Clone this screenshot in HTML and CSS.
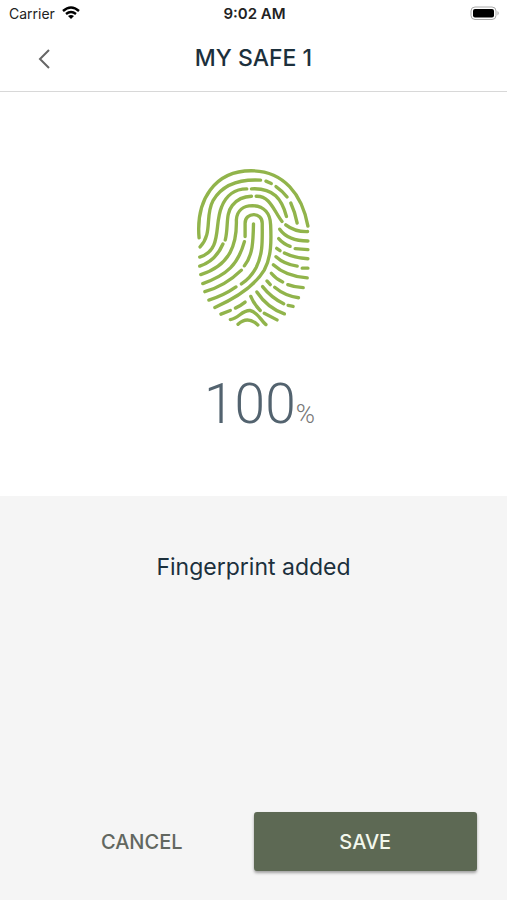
FILE: index.html
```html
<!DOCTYPE html>
<html lang="en">
<head>
    <meta charset="UTF-8">
    <meta name="viewport" content="width=device-width, initial-scale=1.0">
    <title>My Safe 1</title>
    <link rel="stylesheet" href="styles.css">
</head>
<body>
    <div class="screen">
        <div class="status-bar">
            <div class="carrier">
                <span>Carrier</span>
                <svg class="wifi" viewBox="0 0 18 14" aria-hidden="true">
                    <path d="M1 5 Q9 -2 17 5" />
                    <path d="M4 8 Q9 4 14 8" />
                    <path class="dot" d="M6 10 Q9 8 12 10 L9 13 Z" />
                </svg>
            </div>
            <span class="time">9:02 AM</span>
            <svg class="battery" viewBox="0 0 30 15" aria-hidden="true">
                <rect class="battery-case" x="1" y="1" width="25" height="12.5" rx="4" />
                <rect x="3" y="3" width="21" height="8.5" rx="2" />
                <path class="battery-tip" d="M27.5 5 Q30 7.2 27.5 9.5 Z" />
            </svg>
        </div>

        <header class="header">
            <button type="button" class="back" aria-label="Back">
                <svg viewBox="0 0 12 20" aria-hidden="true"><path d="M11 1 L2 10 L11 19" /></svg>
            </button>
            <h1>MY SAFE 1</h1>
        </header>

        <section class="scan">
            <svg class="fingerprint" viewBox="-2 2 387 521" aria-hidden="true">
                <!-- arches -->
                <path d="M28 234 C18 120 75 34 183 34 C280 34 335 105 352 199" />
                <path d="M31 261 C70 218 44 170 70 122 C95 80 140 58 211 62" />
                <path d="M227 65 L243 72 M257 81 Q276 94 290 112 M301 130 Q314 158 320 190" />
                <path d="M30 291 C98 270 72 195 95 142 C108 108 135 88 170 88" />
                <path d="M184 88 C250 84 275 120 288 170" />
                <path d="M30 318 Q77 303 99 252 M106 240 C116 200 106 163 127 137 Q148 111 184 110" />
                <path d="M198 110 C240 108 251 155 275 185" />
                <!-- core -->
                <path d="M33 343 C122 316 141 250 139 180 C141 152 160 138 187 138 C222 139 240 162 241 195 C243 240 244 290 222 330 C196 373 137 413 75 441" />
                <path d="M39 370 C112 344 144 313 163 245" />
                <path d="M165 230 V190 C165 156 216 156 216 190 C216 240 219 280 198 322 Q182 352 154 371" />
                <path d="M190 192 C189 245 188 285 163 317" />
                <!-- lower left -->
                <path d="M45 394 Q106 377 154 330 M57 419 Q99 407 138 380" />
                <path d="M93 461 L121 450 M136 443 Q150 437 165 425" />
                <path d="M121 477 C148 473 154 449 180 450 C202 454 210 478 227 492" />
                <path d="M144 491 Q172 465 203 493" />
                <!-- lower right -->
                <path d="M286 195 Q313 216 351 215 M268 208 C285 232 310 243 352 243" />
                <path d="M265 236 Q279 252 299 259 M314 266 L352 269 M259 265 L269 272" />
                <path d="M282 279 Q312 294 352 296 M257 290 Q281 312 320 318 M335 324 L352 324" />
                <path d="M249 314 Q287 349 350 353 M243 339 Q257 356 277 365 M292 373 Q313 381 338 382" />
                <path d="M230 362 L240 373 M253 381 Q284 407 324 412 M293 435 L308 438" />
                <path d="M217 379 Q243 412 280 430 M200 395 Q232 443 282 460" />
                <path d="M182 408 Q191 431 210 450 M222 458 L260 478" />
            </svg>
            <p class="progress">100<span class="percent">%</span></p>
        </section>

        <main class="result">
            <p class="message">Fingerprint added</p>
            <div class="actions">
                <button type="button" class="btn">CANCEL</button>
                <button type="button" class="btn btn-save">SAVE</button>
            </div>
        </main>
    </div>
</body>
</html>
```

FILE: styles.css
```css
* {
    box-sizing: border-box;
}

body {
    margin: 0;
    font-family: Inter, Arial, sans-serif;
    color: #1c303c;
    background-color: #fff;
}

h1, p {
    margin: 0;
}

button {
    border: none;
    background: transparent;
    padding: 0;
    font-family: inherit;
    cursor: pointer;
}

.screen {
    min-height: 100vh;
    display: flex;
    flex-direction: column;
}

.status-bar {
    display: grid;
    grid-template-columns: 1fr auto 1fr;
    align-items: center;
    height: 26px;
    padding: 0 7px 0 9px;
    font-size: 14px;
    color: #222;
}

.carrier {
    display: flex;
    align-items: center;
    gap: 7px;
}

.wifi {
    width: 18px;
    height: 14px;
    fill: none;
    stroke: #000;
    stroke-width: 2.4;
}

.wifi .dot {
    fill: #000;
    stroke: none;
}

.time {
    font-size: 15px;
    font-weight: 600;
}

.battery {
    width: 30px;
    height: 15px;
    justify-self: end;
}

.battery-case {
    fill: #fff;
    stroke: #aaa;
}

.battery-tip {
    fill: #aaa;
}

.header {
    display: grid;
    grid-template-columns: 64px 1fr 64px;
    align-items: center;
    height: 66px;
    padding: 0 12px;
    border-bottom: 1px solid #d8d8d8;
}

.header h1 {
    font-size: 23px;
    font-weight: 500;
    line-height: 28px;
    text-align: center;
    padding-bottom: 2px;
}

.back {
    height: 44px;
}

.back svg {
    display: block;
    width: 12px;
    height: 20px;
    margin: 0 auto;
    fill: none;
    stroke: #666;
    stroke-width: 2;
}

.scan {
    display: flex;
    flex-direction: column;
    align-items: center;
    padding: 68px 0 50px;
}

.fingerprint {
    width: 130px;
    height: 175px;
    fill: none;
    stroke: #91b44b;
    stroke-width: 10;
    stroke-linecap: round;
}

.progress {
    margin-top: 37px;
    padding-left: 12px;
    font-family: Roboto, sans-serif;
    font-size: 55px;
    font-weight: 300;
    line-height: 64px;
    color: #53636f;
}

.percent {
    font-size: 26px;
    color: #777;
}

.result {
    flex: 1;
    display: flex;
    flex-direction: column;
    justify-content: space-between;
    padding: 56px 30px 29px;
    background-color: #f5f5f5;
}

.message {
    font-size: 23px;
    line-height: 30px;
    text-align: center;
}

.actions {
    display: grid;
    grid-template-columns: 1fr 1fr;
}

.btn {
    height: 59px;
    font-size: 20px;
    font-weight: 500;
    color: #626760;
}

.btn-save {
    border-radius: 3px;
    background-color: #5d6954;
    color: #f3f8ed;
    box-shadow: 0 2px 3px rgba(0, 0, 0, 0.35);
}
```
